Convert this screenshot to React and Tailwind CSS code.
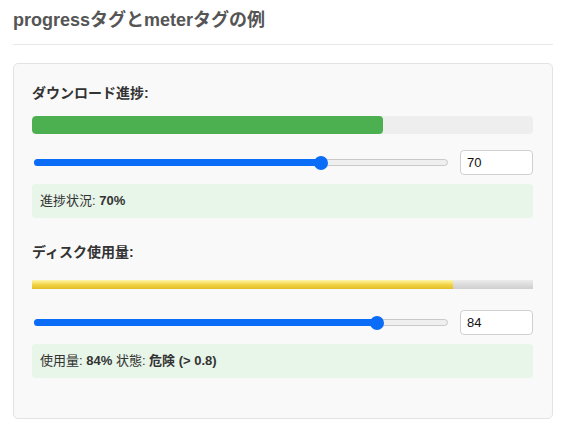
const font = { fontFamily: '"Liberation Sans", "Noto Sans CJK JP", sans-serif' };

function Slider({ value }) {
  // thumb centre travels 401px across a 414px track
  const pos = 6.5 + (value / 100) * 401;
  return (
    <div className="relative ml-[2px] h-[14px] w-[414px]">
      <div className="absolute left-0 right-0 top-[3.5px] h-[7px] rounded-full border border-[#c9c9c9] bg-[#efefef]" />
      <div
        className="absolute left-0 top-[3.5px] h-[7px] rounded-full bg-[#0b6cf8]"
        style={{ width: pos }}
      />
      <div
        className="absolute top-0 h-[14px] w-[14px] rounded-full bg-[#0b6cf8]"
        style={{ left: pos - 7 }}
      />
    </div>
  );
}

function NumberBox({ value }) {
  return (
    <div className="ml-[10px] flex h-[25px] w-[73px] items-center rounded-[4px] border border-[#d0d0d0] bg-white pl-[6px] text-[13px] text-[#111]">
      {value}
    </div>
  );
}

export default function App() {
  return (
    <div className="min-h-[434px] bg-white pl-[13px] pr-[15px]" style={font}>
      <div className="border-b border-[#e8e8e8] pb-[10px] pt-[7px]">
        <h1 className="text-[18px] font-bold leading-[27px] text-[#555]">
          progressタグとmeterタグの例
        </h1>
      </div>

      <div className="mt-[18px] rounded-[5px] border border-[#e3e3e3] bg-[#f9f9f9] pb-[40px] pl-[18px] pr-[19px] pt-[19px]">
        <div className="text-[14px] font-bold leading-[20px] text-[#333]">ダウンロード進捗:</div>
        <div className="mt-[13px] h-[18px] w-full overflow-hidden rounded-[4px] bg-[#eeeeee]">
          <div className="h-full w-[70%] rounded-[4px] bg-[#4caf50]" />
        </div>
        <div className="mt-[16px] flex items-center">
          <Slider value={70} />
          <div className="flex-1" />
          <NumberBox value="70" />
        </div>
        <div className="mt-[9px] rounded-[4px] bg-[#e8f5e9] px-2 py-2 text-[13px] leading-[18px] text-[#333]">
          進捗状況: <b>70%</b>
        </div>

        <div className="mt-[24px] text-[14px] font-bold leading-[20px] text-[#333]">ディスク使用量:</div>
        <div className="mt-[18px] flex h-[9px] w-full">
          <div className="h-full w-[84%] bg-gradient-to-b from-[#fff6a8] via-[#f3d646] to-[#e2bd2a]" />
          <div className="h-full flex-1 bg-gradient-to-b from-[#ececec] via-[#dcdcdc] to-[#cfcfcf]" />
        </div>
        <div className="mt-[21px] flex items-center">
          <Slider value={84} />
          <div className="flex-1" />
          <NumberBox value="84" />
        </div>
        <div className="mt-[9px] rounded-[4px] bg-[#e8f5e9] px-2 py-2 text-[13px] leading-[18px] text-[#333]">
          使用量: <b>84%</b> 状態: <b>危険 (&gt; 0.8)</b>
        </div>
      </div>
    </div>
  );
}
